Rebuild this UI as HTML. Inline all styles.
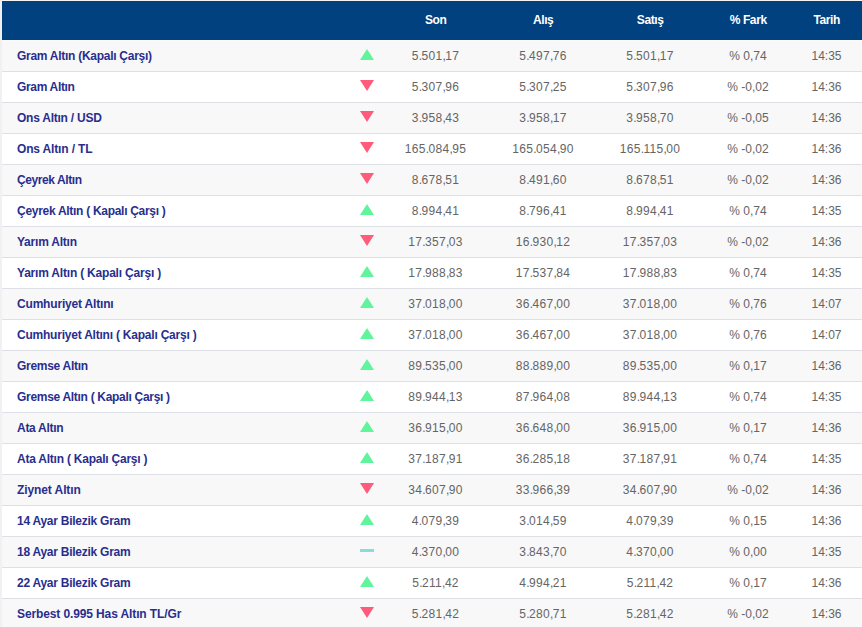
<!DOCTYPE html><html><head><meta charset="utf-8"><style>
*{margin:0;padding:0;box-sizing:border-box}
html,body{width:862px;height:627px;overflow:hidden;background:#f1f1f1;font-family:"Liberation Sans",sans-serif}
#wrap{position:absolute;left:2px;top:0;width:860px;height:627px;background:#f5f4f1}
.l40{position:absolute;left:0;top:40px;width:860px;height:1px;background:#fafafa}
.hd{position:absolute;left:0;top:1px;width:860px;height:39px;background:#02417f}
.h{position:absolute;top:0;height:39px;line-height:39px;width:100px;text-align:center;color:#fff;font-weight:bold;font-size:12px;letter-spacing:-0.4px;text-indent:0.4px}
.r{position:absolute;left:0;width:860px;height:31px;border-bottom:1px solid #dde1e6}
.r.o{background:#f8f8f8}
.r.e{background:#fff}
.n{position:absolute;left:15px;top:0;height:30px;line-height:30px;font-weight:bold;font-size:12px;color:#292e8e;letter-spacing:-0.25px;white-space:nowrap}
.c{position:absolute;top:0;height:30px;line-height:30px;width:100px;text-align:center;font-size:12px;color:#656565;white-space:nowrap}
.d{letter-spacing:0.3px}
.d i{font-style:normal;letter-spacing:-0.5px}
.ic{position:absolute;left:358px;width:14px}
.up{top:8px;width:0;height:0;border-left:7px solid transparent;border-right:7px solid transparent;border-bottom:11px solid #60f49c}
.down{top:8px;width:0;height:0;border-left:7px solid transparent;border-right:7px solid transparent;border-top:11px solid #ff5c7b}
.flat{top:12px;height:3px;background:#8fd8e2}
</style></head><body><div id="wrap">
<div class="l40"></div><div class="hd">
<div class="h" style="left:383.5px">Son</div>
<div class="h" style="left:491.0px">Alış</div>
<div class="h" style="left:598.0px">Satış</div>
<div class="h" style="left:696.0px">% Fark</div>
<div class="h" style="left:774.5px">Tarih</div>
</div>
<div class="r o" style="top:41px"><div class="n" style="letter-spacing:-0.275px">Gram Altın (Kapalı Çarşı)</div><div class="ic up"></div>
<div class="c d" style="left:383.5px">5<i>.</i>501<i>,</i>17</div>
<div class="c d" style="left:491.0px">5<i>.</i>497<i>,</i>76</div>
<div class="c d" style="left:598.0px">5<i>.</i>501<i>,</i>17</div>
<div class="c" style="left:696.0px">% 0,74</div>
<div class="c" style="left:774.5px">14:35</div>
</div>
<div class="r e" style="top:72px"><div class="n" style="letter-spacing:-0.328px">Gram Altın</div><div class="ic down"></div>
<div class="c d" style="left:383.5px">5<i>.</i>307<i>,</i>96</div>
<div class="c d" style="left:491.0px">5<i>.</i>307<i>,</i>25</div>
<div class="c d" style="left:598.0px">5<i>.</i>307<i>,</i>96</div>
<div class="c" style="left:696.0px">% -0,02</div>
<div class="c" style="left:774.5px">14:36</div>
</div>
<div class="r o" style="top:103px"><div class="n" style="letter-spacing:-0.243px">Ons Altın / USD</div><div class="ic down"></div>
<div class="c d" style="left:383.5px">3<i>.</i>958<i>,</i>43</div>
<div class="c d" style="left:491.0px">3<i>.</i>958<i>,</i>17</div>
<div class="c d" style="left:598.0px">3<i>.</i>958<i>,</i>70</div>
<div class="c" style="left:696.0px">% -0,05</div>
<div class="c" style="left:774.5px">14:36</div>
</div>
<div class="r e" style="top:134px"><div class="n" style="letter-spacing:-0.158px">Ons Altın / TL</div><div class="ic down"></div>
<div class="c d" style="left:383.5px">165<i>.</i>084<i>,</i>95</div>
<div class="c d" style="left:491.0px">165<i>.</i>054<i>,</i>90</div>
<div class="c d" style="left:598.0px">165<i>.</i>115<i>,</i>00</div>
<div class="c" style="left:696.0px">% -0,02</div>
<div class="c" style="left:774.5px">14:36</div>
</div>
<div class="r o" style="top:165px"><div class="n" style="letter-spacing:-0.414px">Çeyrek Altın</div><div class="ic down"></div>
<div class="c d" style="left:383.5px">8<i>.</i>678<i>,</i>51</div>
<div class="c d" style="left:491.0px">8<i>.</i>491<i>,</i>60</div>
<div class="c d" style="left:598.0px">8<i>.</i>678<i>,</i>51</div>
<div class="c" style="left:696.0px">% -0,02</div>
<div class="c" style="left:774.5px">14:36</div>
</div>
<div class="r e" style="top:196px"><div class="n" style="letter-spacing:-0.289px">Çeyrek Altın ( Kapalı Çarşı )</div><div class="ic up"></div>
<div class="c d" style="left:383.5px">8<i>.</i>994<i>,</i>41</div>
<div class="c d" style="left:491.0px">8<i>.</i>796<i>,</i>41</div>
<div class="c d" style="left:598.0px">8<i>.</i>994<i>,</i>41</div>
<div class="c" style="left:696.0px">% 0,74</div>
<div class="c" style="left:774.5px">14:35</div>
</div>
<div class="r o" style="top:227px"><div class="n" style="letter-spacing:-0.22px">Yarım Altın</div><div class="ic down"></div>
<div class="c d" style="left:383.5px">17<i>.</i>357<i>,</i>03</div>
<div class="c d" style="left:491.0px">16<i>.</i>930<i>,</i>12</div>
<div class="c d" style="left:598.0px">17<i>.</i>357<i>,</i>03</div>
<div class="c" style="left:696.0px">% -0,02</div>
<div class="c" style="left:774.5px">14:36</div>
</div>
<div class="r e" style="top:258px"><div class="n" style="letter-spacing:-0.202px">Yarım Altın ( Kapalı Çarşı )</div><div class="ic up"></div>
<div class="c d" style="left:383.5px">17<i>.</i>988<i>,</i>83</div>
<div class="c d" style="left:491.0px">17<i>.</i>537<i>,</i>84</div>
<div class="c d" style="left:598.0px">17<i>.</i>988<i>,</i>83</div>
<div class="c" style="left:696.0px">% 0,74</div>
<div class="c" style="left:774.5px">14:35</div>
</div>
<div class="r o" style="top:289px"><div class="n" style="letter-spacing:-0.181px">Cumhuriyet Altını</div><div class="ic up"></div>
<div class="c d" style="left:383.5px">37<i>.</i>018<i>,</i>00</div>
<div class="c d" style="left:491.0px">36<i>.</i>467<i>,</i>00</div>
<div class="c d" style="left:598.0px">37<i>.</i>018<i>,</i>00</div>
<div class="c" style="left:696.0px">% 0,76</div>
<div class="c" style="left:774.5px">14:07</div>
</div>
<div class="r e" style="top:320px"><div class="n" style="letter-spacing:-0.22px">Cumhuriyet Altını ( Kapalı Çarşı )</div><div class="ic up"></div>
<div class="c d" style="left:383.5px">37<i>.</i>018<i>,</i>00</div>
<div class="c d" style="left:491.0px">36<i>.</i>467<i>,</i>00</div>
<div class="c d" style="left:598.0px">37<i>.</i>018<i>,</i>00</div>
<div class="c" style="left:696.0px">% 0,76</div>
<div class="c" style="left:774.5px">14:07</div>
</div>
<div class="r o" style="top:351px"><div class="n" style="letter-spacing:-0.295px">Gremse Altın</div><div class="ic up"></div>
<div class="c d" style="left:383.5px">89<i>.</i>535<i>,</i>00</div>
<div class="c d" style="left:491.0px">88<i>.</i>889<i>,</i>00</div>
<div class="c d" style="left:598.0px">89<i>.</i>535<i>,</i>00</div>
<div class="c" style="left:696.0px">% 0,17</div>
<div class="c" style="left:774.5px">14:36</div>
</div>
<div class="r e" style="top:382px"><div class="n" style="letter-spacing:-0.304px">Gremse Altın ( Kapalı Çarşı )</div><div class="ic up"></div>
<div class="c d" style="left:383.5px">89<i>.</i>944<i>,</i>13</div>
<div class="c d" style="left:491.0px">87<i>.</i>964<i>,</i>08</div>
<div class="c d" style="left:598.0px">89<i>.</i>944<i>,</i>13</div>
<div class="c" style="left:696.0px">% 0,74</div>
<div class="c" style="left:774.5px">14:35</div>
</div>
<div class="r o" style="top:413px"><div class="n" style="letter-spacing:-0.275px">Ata Altın</div><div class="ic up"></div>
<div class="c d" style="left:383.5px">36<i>.</i>915<i>,</i>00</div>
<div class="c d" style="left:491.0px">36<i>.</i>648<i>,</i>00</div>
<div class="c d" style="left:598.0px">36<i>.</i>915<i>,</i>00</div>
<div class="c" style="left:696.0px">% 0,17</div>
<div class="c" style="left:774.5px">14:36</div>
</div>
<div class="r e" style="top:444px"><div class="n" style="letter-spacing:-0.23px">Ata Altın ( Kapalı Çarşı )</div><div class="ic up"></div>
<div class="c d" style="left:383.5px">37<i>.</i>187<i>,</i>91</div>
<div class="c d" style="left:491.0px">36<i>.</i>285<i>,</i>18</div>
<div class="c d" style="left:598.0px">37<i>.</i>187<i>,</i>91</div>
<div class="c" style="left:696.0px">% 0,74</div>
<div class="c" style="left:774.5px">14:35</div>
</div>
<div class="r o" style="top:475px"><div class="n" style="letter-spacing:-0.095px">Ziynet Altın</div><div class="ic down"></div>
<div class="c d" style="left:383.5px">34<i>.</i>607<i>,</i>90</div>
<div class="c d" style="left:491.0px">33<i>.</i>966<i>,</i>39</div>
<div class="c d" style="left:598.0px">34<i>.</i>607<i>,</i>90</div>
<div class="c" style="left:696.0px">% -0,02</div>
<div class="c" style="left:774.5px">14:36</div>
</div>
<div class="r e" style="top:506px"><div class="n" style="letter-spacing:-0.255px">14 Ayar Bilezik Gram</div><div class="ic up"></div>
<div class="c d" style="left:383.5px">4<i>.</i>079<i>,</i>39</div>
<div class="c d" style="left:491.0px">3<i>.</i>014<i>,</i>59</div>
<div class="c d" style="left:598.0px">4<i>.</i>079<i>,</i>39</div>
<div class="c" style="left:696.0px">% 0,15</div>
<div class="c" style="left:774.5px">14:36</div>
</div>
<div class="r o" style="top:537px"><div class="n" style="letter-spacing:-0.255px">18 Ayar Bilezik Gram</div><div class="ic flat"></div>
<div class="c d" style="left:383.5px">4<i>.</i>370<i>,</i>00</div>
<div class="c d" style="left:491.0px">3<i>.</i>843<i>,</i>70</div>
<div class="c d" style="left:598.0px">4<i>.</i>370<i>,</i>00</div>
<div class="c" style="left:696.0px">% 0,00</div>
<div class="c" style="left:774.5px">14:35</div>
</div>
<div class="r e" style="top:568px"><div class="n" style="letter-spacing:-0.255px">22 Ayar Bilezik Gram</div><div class="ic up"></div>
<div class="c d" style="left:383.5px">5<i>.</i>211<i>,</i>42</div>
<div class="c d" style="left:491.0px">4<i>.</i>994<i>,</i>21</div>
<div class="c d" style="left:598.0px">5<i>.</i>211<i>,</i>42</div>
<div class="c" style="left:696.0px">% 0,17</div>
<div class="c" style="left:774.5px">14:36</div>
</div>
<div class="r o" style="top:599px"><div class="n" style="letter-spacing:-0.118px">Serbest 0.995 Has Altın TL/Gr</div><div class="ic down"></div>
<div class="c d" style="left:383.5px">5<i>.</i>281<i>,</i>42</div>
<div class="c d" style="left:491.0px">5<i>.</i>280<i>,</i>71</div>
<div class="c d" style="left:598.0px">5<i>.</i>281<i>,</i>42</div>
<div class="c" style="left:696.0px">% -0,02</div>
<div class="c" style="left:774.5px">14:36</div>
</div>
</div></body></html>
